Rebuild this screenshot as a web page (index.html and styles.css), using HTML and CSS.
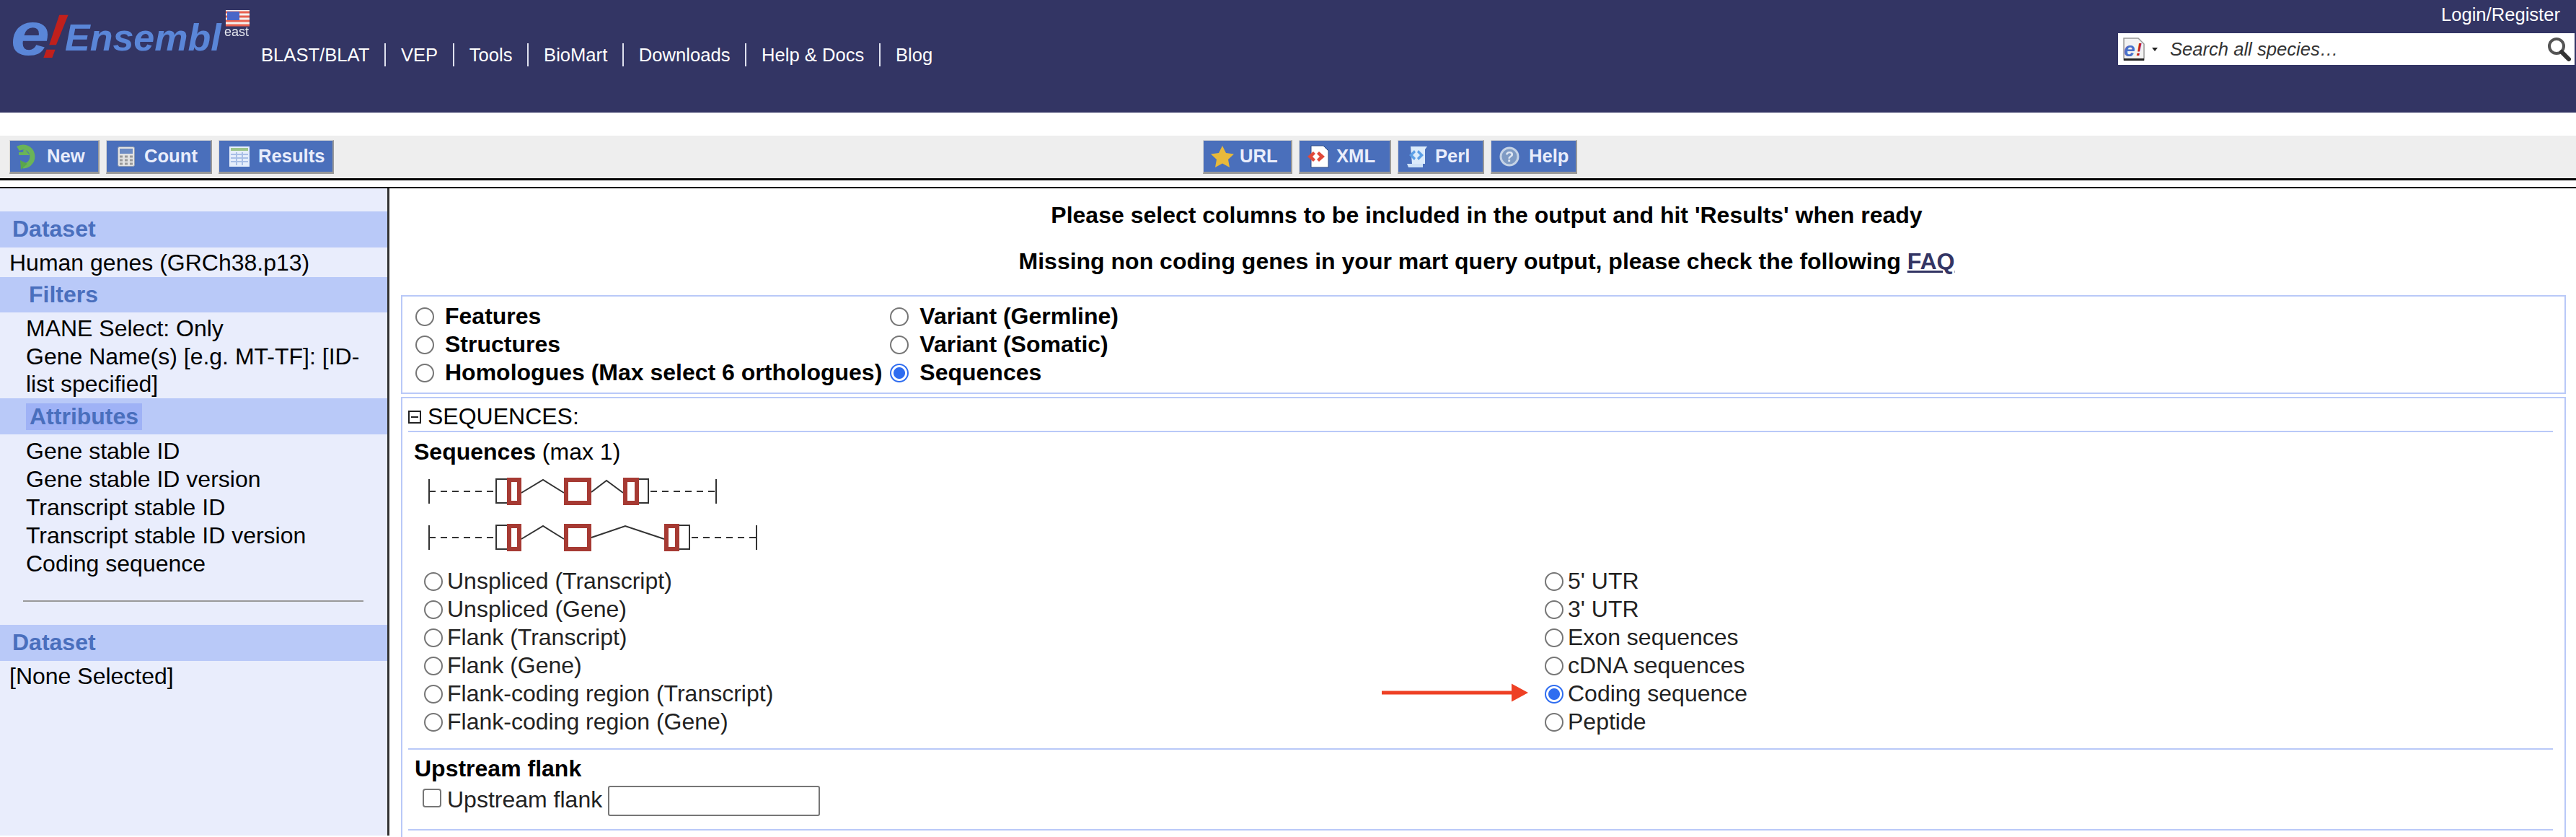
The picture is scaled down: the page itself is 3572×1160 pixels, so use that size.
FILE: index.html
```html
<!DOCTYPE html>
<html lang="en">
<head>
    <meta charset="UTF-8">
    <meta name="viewport" content="width=device-width, initial-scale=1.0">
    <title>BioMart - MartView</title>
    <link rel="stylesheet" href="styles.css">
</head>
<body>
    <header class="masthead">
        <svg class="logo" viewBox="0 0 350 100" width="350" height="100">
            <g class="logo-soft">
                <text class="logo-e" transform="translate(15 76) scale(1.15 1)">e</text>
                <text class="logo-bang" transform="translate(57 80) skewX(-10)">!</text>
                <text class="logo-name" x="90" y="70">Ensembl</text>
                <rect x="313" y="14" width="33" height="22" fill="#f4f0ee"/>
                <path d="M313 17h33M313 23h33M313 29h33M313 35h33" stroke="#e8604f" stroke-width="3"/>
                <rect x="315" y="16" width="17" height="12" fill="#4a66c8"/>
                <text class="logo-east" x="311" y="50">east</text>
            </g>
        </svg>
        <nav class="topnav">
            <a href="#">BLAST/BLAT</a>
            <a href="#">VEP</a>
            <a href="#">Tools</a>
            <a href="#">BioMart</a>
            <a href="#">Downloads</a>
            <a href="#">Help &amp; Docs</a>
            <a href="#">Blog</a>
        </nav>
        <div class="account">
            <a class="login" href="#">Login/Register</a>
            <div class="search">
                <svg width="32" height="32" viewBox="0 0 32 32">
                    <path d="M2 1h20l8 8v22H2z" fill="#f2f2f2" stroke="#999" stroke-width="1.5"/>
                    <rect x="2" y="29" width="28" height="3" fill="#222"/>
                    <text class="mini-e" x="2" y="26">e</text>
                    <text class="mini-bang" x="19" y="25">!</text>
                </svg>
                <span class="caret"></span>
                <span class="search-hint">Search all species…</span>
                <svg class="lens" width="34" height="34" viewBox="0 0 34 34">
                    <circle cx="14" cy="13" r="10" fill="#fff" stroke="#555" stroke-width="4"/>
                    <path d="M21 21l10 10" stroke="#333" stroke-width="6" stroke-linecap="round"/>
                </svg>
            </div>
        </div>
    </header>

    <div class="toolbar">
        <div class="tools tools-left">
            <button class="tool tool-new">
                <svg width="36" height="38" viewBox="0 0 36 38">
                    <path d="M9 8a13 13 0 1 1 7 24" fill="none" stroke="#6ab458" stroke-width="7"/>
                    <path d="M12 24l10 5-9 8z" fill="#5aa64c"/>
                    <path d="M10 15h11l-4-5" fill="none" stroke="#6ab458" stroke-width="4"/>
                </svg>
                New
            </button>
            <button class="tool tool-count">
                <svg width="24" height="28" viewBox="0 0 24 28">
                    <rect x="0.5" y="0.5" width="23" height="27" rx="2" fill="#e2e2e2" stroke="#8f9bb0"/>
                    <rect x="3" y="3" width="18" height="7" fill="#6c8bc4"/>
                    <path d="M3 14h4M10 14h4M17 14h4M3 19h4M10 19h4M17 19h4M3 24h4M10 24h4M17 24h4" stroke="#999" stroke-width="3"/>
                </svg>
                Count
            </button>
            <button class="tool tool-results">
                <svg width="28" height="28" viewBox="0 0 28 28">
                    <rect width="28" height="28" fill="#e6eefb"/>
                    <rect x="2" y="2" width="24" height="4" fill="#9cc48d"/>
                    <path d="M2 11h24M2 16h24M2 21h24M10 8v18M18 8v18" stroke="#a9bfe6" stroke-width="2"/>
                </svg>
                Results
            </button>
        </div>
        <div class="tools tools-right">
            <button class="tool tool-url">
                <svg width="32" height="32" viewBox="0 0 32 32">
                    <path d="M16 1l5 10 11 1.500-8 7.500 2 11-10-5.500-10 5.500 2-11-8-7.500 11-1.500z" fill="#e8b93a"/>
                </svg>
                URL
            </button>
            <button class="tool tool-xml">
                <svg width="31" height="32" viewBox="0 0 31 32">
                    <path d="M6 1h17l7 7v23H6z" fill="#fff" stroke="#2f4c86"/>
                    <path d="M9 9l-8 7 8 7 3-3-4-4 4-4zM17 9l8 7-8 7-3-3 4-4-4-4z" fill="#e0493a"/>
                </svg>
                XML
            </button>
            <button class="tool tool-perl">
                <svg width="31" height="32" viewBox="0 0 31 32">
                    <path d="M7 2h23l-3 4v20H9z" fill="#dcebfb"/>
                    <path d="M2 26h22v5H4z" fill="#cfe2f7"/>
                    <path d="M12 7l-7 7 7 7 2-3-4-4 4-4zM18 7l7 7-7 7-2-3 4-4-4-4z" fill="#5c9fe6"/>
                </svg>
                Perl
            </button>
            <button class="tool tool-help">
                <svg width="28" height="32" viewBox="0 0 28 32">
                    <circle cx="14" cy="16" r="12" fill="#7f9bc4" stroke="#c5d3e6" stroke-width="3"/>
                    <text class="help-mark" x="14" y="23">?</text>
                </svg>
                Help
            </button>
        </div>
    </div>

    <main class="workspace">
        <aside class="summary">
            <h3 class="band">Dataset</h3>
            <p class="dataset-name">Human genes (GRCh38.p13)</p>
            <h3 class="band band-sub band-filters">Filters</h3>
            <ul class="picked picked-filters">
                <li>MANE Select: Only</li>
                <li>Gene Name(s) [e.g. MT-TF]: [ID-list specified]</li>
            </ul>
            <h3 class="band band-sub band-active"><span>Attributes</span></h3>
            <ul class="picked">
                <li>Gene stable ID</li>
                <li>Gene stable ID version</li>
                <li>Transcript stable ID</li>
                <li>Transcript stable ID version</li>
                <li>Coding sequence</li>
            </ul>
            <hr class="summary-rule">
            <h3 class="band">Dataset</h3>
            <p class="dataset-name">[None Selected]</p>
        </aside>

        <section class="content">
            <p class="notice notice-first">Please select columns to be included in the output and hit 'Results' when ready</p>
            <p class="notice">Missing non coding genes in your mart query output, please check the following <a href="#">FAQ</a></p>

            <form class="panel pages">
                <label class="choice"><input type="radio" name="page">Features</label>
                <label class="choice"><input type="radio" name="page">Variant (Germline)</label>
                <label class="choice"><input type="radio" name="page">Structures</label>
                <label class="choice"><input type="radio" name="page">Variant (Somatic)</label>
                <label class="choice"><input type="radio" name="page">Homologues (Max select 6 orthologues)</label>
                <label class="choice"><input type="radio" name="page" checked>Sequences</label>
            </form>

            <div class="panel sequences">
                <div class="group-head">
                    <svg width="18" height="18" viewBox="0 0 18 18">
                        <rect x="1" y="1" width="16" height="16" fill="#fff" stroke="#222" stroke-width="2"/>
                        <path d="M4 9h10" stroke="#222" stroke-width="2"/>
                    </svg>
                    SEQUENCES:
                </div>
                <div class="group-body">
                    <div class="seq-title"><b>Sequences</b> (max 1)</div>
                    <svg class="gene" width="470" height="42" viewBox="0 0 470 42">
                        <path class="gene-line" d="M3 4v34M401 4v34M131 23l30-18 29 18M228 22l21-16 23 17"/>
                        <path class="gene-dash" d="M3 21h91M310 21h91"/>
                        <rect class="gene-utr" x="96" y="4" width="24" height="33"/>
                        <rect class="gene-utr" x="285" y="4" width="22" height="33"/>
                        <rect class="gene-cds" x="114" y="5" width="14" height="32"/>
                        <rect class="gene-cds" x="193" y="5" width="32" height="32"/>
                        <rect class="gene-cds" x="275" y="5" width="16" height="32"/>
                    </svg>
                    <svg class="gene" width="470" height="42" viewBox="0 0 470 42">
                        <path class="gene-line" d="M3 4v34M457 4v34M131 23l30-18 29 18M228 21l47-16 54 18"/>
                        <path class="gene-dash" d="M3 21h91M367 21h90"/>
                        <rect class="gene-utr" x="96" y="4" width="24" height="33"/>
                        <rect class="gene-utr" x="342" y="4" width="22" height="33"/>
                        <rect class="gene-cds" x="114" y="5" width="14" height="32"/>
                        <rect class="gene-cds" x="193" y="5" width="32" height="32"/>
                        <rect class="gene-cds" x="332" y="5" width="15" height="32"/>
                    </svg>
                    <div class="seq-options">
                        <label class="option"><input type="radio" name="seq">Unspliced (Transcript)</label>
                        <label class="option"><input type="radio" name="seq">5' UTR</label>
                        <label class="option"><input type="radio" name="seq">Unspliced (Gene)</label>
                        <label class="option"><input type="radio" name="seq">3' UTR</label>
                        <label class="option"><input type="radio" name="seq">Flank (Transcript)</label>
                        <label class="option"><input type="radio" name="seq">Exon sequences</label>
                        <label class="option"><input type="radio" name="seq">Flank (Gene)</label>
                        <label class="option"><input type="radio" name="seq">cDNA sequences</label>
                        <label class="option"><input type="radio" name="seq">Flank-coding region (Transcript)</label>
                        <label class="option"><input type="radio" name="seq" checked>Coding sequence</label>
                        <label class="option"><input type="radio" name="seq">Flank-coding region (Gene)</label>
                        <label class="option"><input type="radio" name="seq">Peptide</label>
                        <svg class="pointer" width="204" height="26" viewBox="0 0 204 26">
                            <path d="M0 10.500h180v-10l23 12.500-23 12.500v-10H0z" fill="#ee4024"/>
                        </svg>
                    </div>
                    <div class="flank">
                        <div class="flank-title">Upstream flank</div>
                        <label class="flank-row"><input type="checkbox">Upstream flank <input class="flank-size" type="text"></label>
                    </div>
                </div>
            </div>
        </section>
    </main>
</body>
</html>
```

FILE: styles.css
```css
body {
    margin: 0;
    height: 1160px;
    overflow: hidden;
    background-color: #fff;
    font-family: "Liberation Sans", Arial, sans-serif;
    font-size: 32px;
    line-height: 39px;
    color: #000;
}

/* top bar */
.masthead {
    display: flex;
    height: 156px;
    background-color: #333564;
}
.logo {
    flex: none;
    margin-right: 12px;
}
.logo-soft {
    filter: blur(0.6px);
}
.logo-e, .logo-name {
    fill: #5a86d8;
    font-weight: bold;
    font-style: italic;
}
.logo-e {
    font-size: 84px;
}
.logo-name {
    font-size: 52px;
}
.logo-bang {
    fill: #c0201c;
    font-size: 86px;
    font-weight: bold;
    font-style: italic;
}
.logo-east {
    fill: #e6e8f0;
    font-size: 18px;
}
.topnav {
    display: flex;
    height: 32px;
    margin-top: 60px;
    font-size: 25.6px;
    line-height: 32px;
}
.topnav a {
    padding: 0 20.6px 0 21px;
    border-left: 2px solid #dfe1ee;
    color: #fff;
    text-decoration: none;
}
.topnav a:first-child {
    padding-left: 0;
    border-left: none;
}
.account {
    display: flex;
    flex-direction: column;
    align-items: flex-end;
    margin-left: auto;
    padding-right: 2px;
}
.login {
    margin: 4px 20px 10px 0;
    font-size: 25.6px;
    line-height: 32px;
    color: #fff;
    text-decoration: none;
}
.search {
    display: flex;
    align-items: center;
    box-sizing: border-box;
    width: 633px;
    height: 44px;
    padding: 0 5px 0 6px;
    background-color: #fff;
}
.mini-e {
    fill: #4a6fc8;
    font-size: 28px;
    font-weight: bold;
    font-style: italic;
}
.mini-bang {
    fill: #c0201c;
    font-size: 24px;
    font-weight: bold;
    font-style: italic;
}
.caret {
    margin: 0 17px 0 9px;
    border-top: 5px solid #222;
    border-left: 4px solid transparent;
    border-right: 4px solid transparent;
}
.search-hint {
    font-size: 25.6px;
    font-style: italic;
    color: #333;
}
.lens {
    margin-left: auto;
}

/* button strip */
.toolbar {
    display: flex;
    height: 59px;
    margin-top: 32px;
    background-color: #eee;
    border-bottom: 3px solid #000;
}
.tools {
    display: flex;
    gap: 9px;
    padding-top: 6px;
}
.tools-left {
    padding-left: 13px;
}
.tools-right {
    margin-left: 1205px;
}
.tool {
    display: flex;
    align-items: center;
    height: 47px;
    padding: 0;
    background-color: #4a6fbb;
    border-style: solid;
    border-color: #d5d5d5 #999 #999 #d5d5d5;
    border-width: 1px 2px 3px 1px;
    font-family: inherit;
    font-size: 25.6px;
    font-weight: bold;
    color: #e9edfb;
}
.tool svg {
    flex: none;
    filter: blur(0.5px);
}
.tool-new { width: 125px; gap: 13px; padding-left: 2px; }
.tool-count { width: 147px; gap: 13px; padding-left: 15px; }
.tool-results { width: 160px; gap: 12px; padding-left: 14px; }
.tool-url { width: 124px; gap: 8px; padding-left: 10px; }
.tool-xml { width: 128px; gap: 10px; padding-left: 10px; }
.tool-perl { width: 120px; gap: 10px; padding-left: 10px; }
.tool-help { width: 120px; gap: 13px; padding-left: 11px; }
.help-mark {
    fill: #dfe7f3;
    font-size: 20px;
    font-weight: bold;
    text-anchor: middle;
}

/* two columns under the strip */
.workspace {
    display: flex;
    height: 897px;
    margin-top: 9px;
    border-top: 2px solid #000;
}
.summary {
    flex: none;
    box-sizing: border-box;
    width: 540px;
    padding-top: 32px;
    background-color: #e9edfc;
    border-right: 3px solid #333;
}
.band {
    margin: 0;
    padding: 0 17px;
    height: 50px;
    background-color: #b9c9f8;
    font-size: 32px;
    line-height: 48px;
    font-weight: bold;
    color: #4a6fbd;
}
.band-sub {
    padding-left: 40px;
}
.band-filters {
    height: 49px;
}
.band-active span {
    display: inline-block;
    height: 37px;
    margin: 7px 0 0 -4px;
    padding: 0 5px;
    background-color: #9fb2f6;
    line-height: 37px;
    vertical-align: top;
}
.dataset-name {
    margin: 0;
    padding: 2px 0 0 13px;
    height: 39px;
}
.picked {
    margin: 0;
    padding: 4px 30px 0 36px;
    list-style: none;
}
.picked-filters {
    height: 116px;
    padding-top: 3px;
    line-height: 38.5px;
}
.summary-rule {
    height: 2px;
    margin: 31px 33px 32px 32px;
    border: none;
    background-color: #999;
}

/* main column */
.content {
    flex: 1;
    min-width: 0;
    padding: 0 14px 0 16px;
}
.notice {
    margin: 0;
    padding-left: 9px;
    font-weight: bold;
    text-align: center;
}
.notice-first {
    padding-top: 18px;
    padding-bottom: 25px;
}
.notice a {
    color: #333564;
}
.panel {
    border: 2px solid #b9c9f8;
}
.pages {
    display: grid;
    grid-template-columns: auto auto;
    justify-content: start;
    column-gap: 11px;
    margin-top: 27px;
    padding: 8px 18px;
    font-weight: bold;
}
.choice {
    display: flex;
    align-items: center;
    gap: 15px;
}
input[type="radio"] {
    flex: none;
    box-sizing: border-box;
    width: 26px;
    height: 26px;
    margin: 0;
    appearance: none;
    border: 2px solid #767676;
    border-radius: 50%;
    background-color: #fff;
}
input[type="radio"]:checked {
    border-color: #2f6df0;
    background: radial-gradient(circle, #2f6df0 0, #2f6df0 7.5px, #fff 8.5px);
}
input[type="checkbox"] {
    flex: none;
    box-sizing: border-box;
    width: 26px;
    height: 26px;
    margin: 4px 0 0;
    appearance: none;
    border: 2px solid #767676;
    border-radius: 4px;
    background-color: #fff;
}
.sequences {
    box-sizing: border-box;
    height: 610px;
    margin-top: 4px;
    padding: 0 16px 0 8px;
    border-bottom: none;
}
.group-head {
    display: flex;
    align-items: center;
    gap: 9px;
    box-sizing: border-box;
    height: 47px;
    padding-top: 6px;
    border-bottom: 2px solid #b9c9f8;
}
.seq-title {
    padding: 8px 0 14px 8px;
}
.gene {
    display: block;
    margin: 0 0 22px 26px;
    filter: blur(0.4px);
}
.seq-options {
    position: relative;
    display: grid;
    grid-template-columns: 1554px 1fr;
    margin-top: -2px;
    padding-left: 22px;
    color: #222;
}
.option {
    display: flex;
    align-items: center;
    gap: 6px;
}
.pointer {
    position: absolute;
    left: 1350px;
    top: 161px;
}
.flank {
    height: 103px;
    margin-top: 17px;
    padding-top: 7px;
    border-top: 2px solid #b9c9f8;
    border-bottom: 2px solid #b9c9f8;
}
.flank-title {
    padding-left: 9px;
    font-weight: bold;
}
.flank-row {
    display: flex;
    align-items: flex-start;
    gap: 8px;
    margin-top: 4px;
    padding-left: 20px;
    color: #222;
}
.flank-size {
    box-sizing: border-box;
    width: 294px;
    height: 42px;
    border: 2px solid #767676;
    border-radius: 3px;
    background-color: #fff;
}
.gene-line {
    fill: none;
    stroke: #333;
    stroke-width: 2;
}
.gene-dash {
    fill: none;
    stroke: #333;
    stroke-width: 2;
    stroke-dasharray: 9 7;
}
.gene-utr {
    fill: #fff;
    stroke: #333;
    stroke-width: 2;
}
.gene-cds {
    fill: #fff;
    stroke: #a63a33;
    stroke-width: 6;
}
```
